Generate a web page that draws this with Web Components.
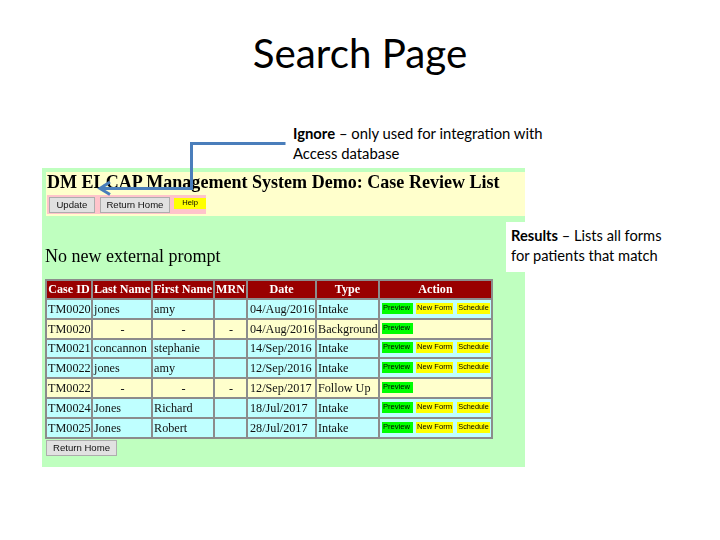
<!DOCTYPE html>
<html lang="en"><head><meta charset="utf-8"><title>Search Page</title>
<style>html,body{margin:0;padding:0;background:#fff}</style></head>
<body>
<slide-page>
  <span slot="title">Search Page</span>
  <span slot="note"><b>Ignore</b> – only used for integration with<br>Access database</span>
  <span slot="side"><b>Results</b> – Lists all forms<br>for patients that match</span>
  <app-panel></app-panel>
</slide-page>
<script>
class SlidePage extends HTMLElement{constructor(){super();this.attachShadow({mode:'open'}).innerHTML=`<style>
:host{display:block;position:relative;width:720px;height:540px;overflow:hidden;background:#fff;color:#000;font-family:Lato,"Open Sans",sans-serif}
.title{height:113px;padding-top:29px;box-sizing:border-box;text-align:center;font-size:40.300px;line-height:48px}
.note{height:55px;padding-left:293px;font-size:14.830px;line-height:20px;padding-top:10px;box-sizing:border-box;}
.body{padding-left:42px}
.side{position:absolute;left:506px;top:222px;width:170px;height:50px;box-sizing:border-box;background:#fff;padding:3.500px 5px;font-size:14.650px;line-height:20px}
svg{position:absolute;left:0;top:0;pointer-events:none}
</style><div class="title"><slot name="title"></slot></div><div class="note"><slot name="note"></slot></div>
<div class="body"><slot></slot></div><div class="side"><slot name="side"></slot></div>
<svg width="720" height="540"><path d="M285.500 143.500H191.500V188.500H101" fill="none" stroke="#4a7ebb" stroke-width="3"/><path d="M110 182L100 188.500L110 194.500" fill="none" stroke="#4a7ebb" stroke-width="3"/></svg>`}}
class AppPanel extends HTMLElement{constructor(){super();this.attachShadow({mode:'open'}).innerHTML=`<style>
:host{display:block;width:483px;height:299px;box-sizing:border-box;background:#bfffbf;padding:4px 0 0 3px;font-family:"Liberation Serif",serif;color:#000;filter:blur(.25px)}
.head{background:#ffffcc;height:44px;margin-left:1px;padding:0 0 0 1px;box-sizing:border-box}
h1{margin:0;font-size:18.060px;line-height:20px;font-weight:bold;white-space:nowrap}
.bar{display:flex;align-items:center;width:159px;height:19px;background:#ffc4cb;margin-top:3px;padding-left:2px;box-sizing:border-box;gap:5px}
p{margin:30px 0 13px;font-size:18px;line-height:20px}
.foot{margin-top:-2px}
</style><div class="head"><h1>DM ELCAP Management System Demo: Case Review List</h1>
<div class="bar"><ui-button style="width:46px">Update</ui-button><ui-button style="width:71px">Return Home</ui-button><ui-tag kind="help" style="margin:0 0 2px -1px;width:32px">Help</ui-tag></div></div>
<p>No new external prompt</p><case-table></case-table><div class="foot"><ui-button style="width:71px;margin-left:1px">Return Home</ui-button></div>`}}
class UiButton extends HTMLElement{constructor(){super();this.attachShadow({mode:'open'}).innerHTML=`<style>
:host{display:inline-block;height:16px;box-sizing:border-box;background:#e1e1e1;border:1px solid #adadad;font:9.600px/14px "Liberation Sans",sans-serif;text-align:center;color:#111;white-space:nowrap}
</style><slot></slot>`}}
class UiTag extends HTMLElement{constructor(){super();this.attachShadow({mode:'open'}).innerHTML=`<style>
:host{display:inline-block;height:11px;padding:0 1px;background:#ffff00;font:7.600px/10px "Liberation Sans",sans-serif;color:#000;white-space:nowrap;text-align:center;box-sizing:border-box}
:host([kind=preview]){background:#00ff00;width:31px;text-align:left;margin-right:3px}
:host([kind=form]){width:37px;margin-right:4px}
:host([kind=sched]){width:33px;font-size:7.300px}
</style><slot></slot>`}}
const ROWS=[
['TM0020','jones','amy','','04/Aug/2016','Intake',1],
['TM0020','-','-','-','04/Aug/2016','Background',0],
['TM0021','concannon','stephanie','','14/Sep/2016','Intake',1],
['TM0022','jones','amy','','12/Sep/2016','Intake',1],
['TM0022','-','-','-','12/Sep/2017','Follow Up',0],
['TM0024','Jones','Richard','','18/Jul/2017','Intake',1],
['TM0025','Jones','Robert','','28/Jul/2017','Intake',1]];
class CaseTable extends HTMLElement{constructor(){super();
const tags=f=>`<ui-tag kind="preview">Preview</ui-tag>`+(f?`<ui-tag kind="form">New Form</ui-tag><ui-tag kind="sched">Schedule</ui-tag>`:'');
this.attachShadow({mode:'open'}).innerHTML=`<style>
:host{display:block;width:448px;font:12.200px/1 "Liberation Serif",serif;color:#111}
table{border-collapse:collapse;table-layout:fixed;width:448px;border:2px solid #8c8c8c}
th,td{border:2px solid #8c8c8c;padding:0 0 0 1px;height:18px;box-sizing:content-box;white-space:nowrap;overflow:hidden}
th{background:#990000;color:#fff;font-size:12.100px;text-align:center;padding:0;height:17px}
td{background:#bfffff}
tr.m td{background:#ffffcc}
tr.s td{height:17px}
td.c{text-align:center}
td.d{padding-left:2px}
td.a{padding-left:2px;padding-bottom:2px;height:16px}
td.a div{display:flex;align-items:center}
tr.s td.a{height:15px}
</style><table><colgroup><col style="width:46px"><col style="width:60px"><col style="width:62px"><col style="width:33px"><col style="width:69px"><col style="width:63px"><col></colgroup>
<thead><tr><th>Case ID</th><th>Last Name</th><th>First Name</th><th>MRN</th><th>Date</th><th>Type</th><th>Action</th></tr></thead><tbody>
${ROWS.map((r,i)=>{const m=!r[6];return `<tr class="${m?'m':''} ${i==2?'s':''}"><td>${r[0]}</td><td class="${m?'c':''}">${r[1]}</td><td class="${m?'c':''}">${r[2]}</td><td class="${m?'c':''}">${r[3]}</td><td class="d">${r[4]}</td><td>${r[5]}</td><td class="a"><div>${tags(r[6])}</div></td></tr>`}).join('')}
</tbody></table>`}}
customElements.define('slide-page',SlidePage);
customElements.define('app-panel',AppPanel);
customElements.define('ui-button',UiButton);
customElements.define('ui-tag',UiTag);
customElements.define('case-table',CaseTable);
</script></body></html>
